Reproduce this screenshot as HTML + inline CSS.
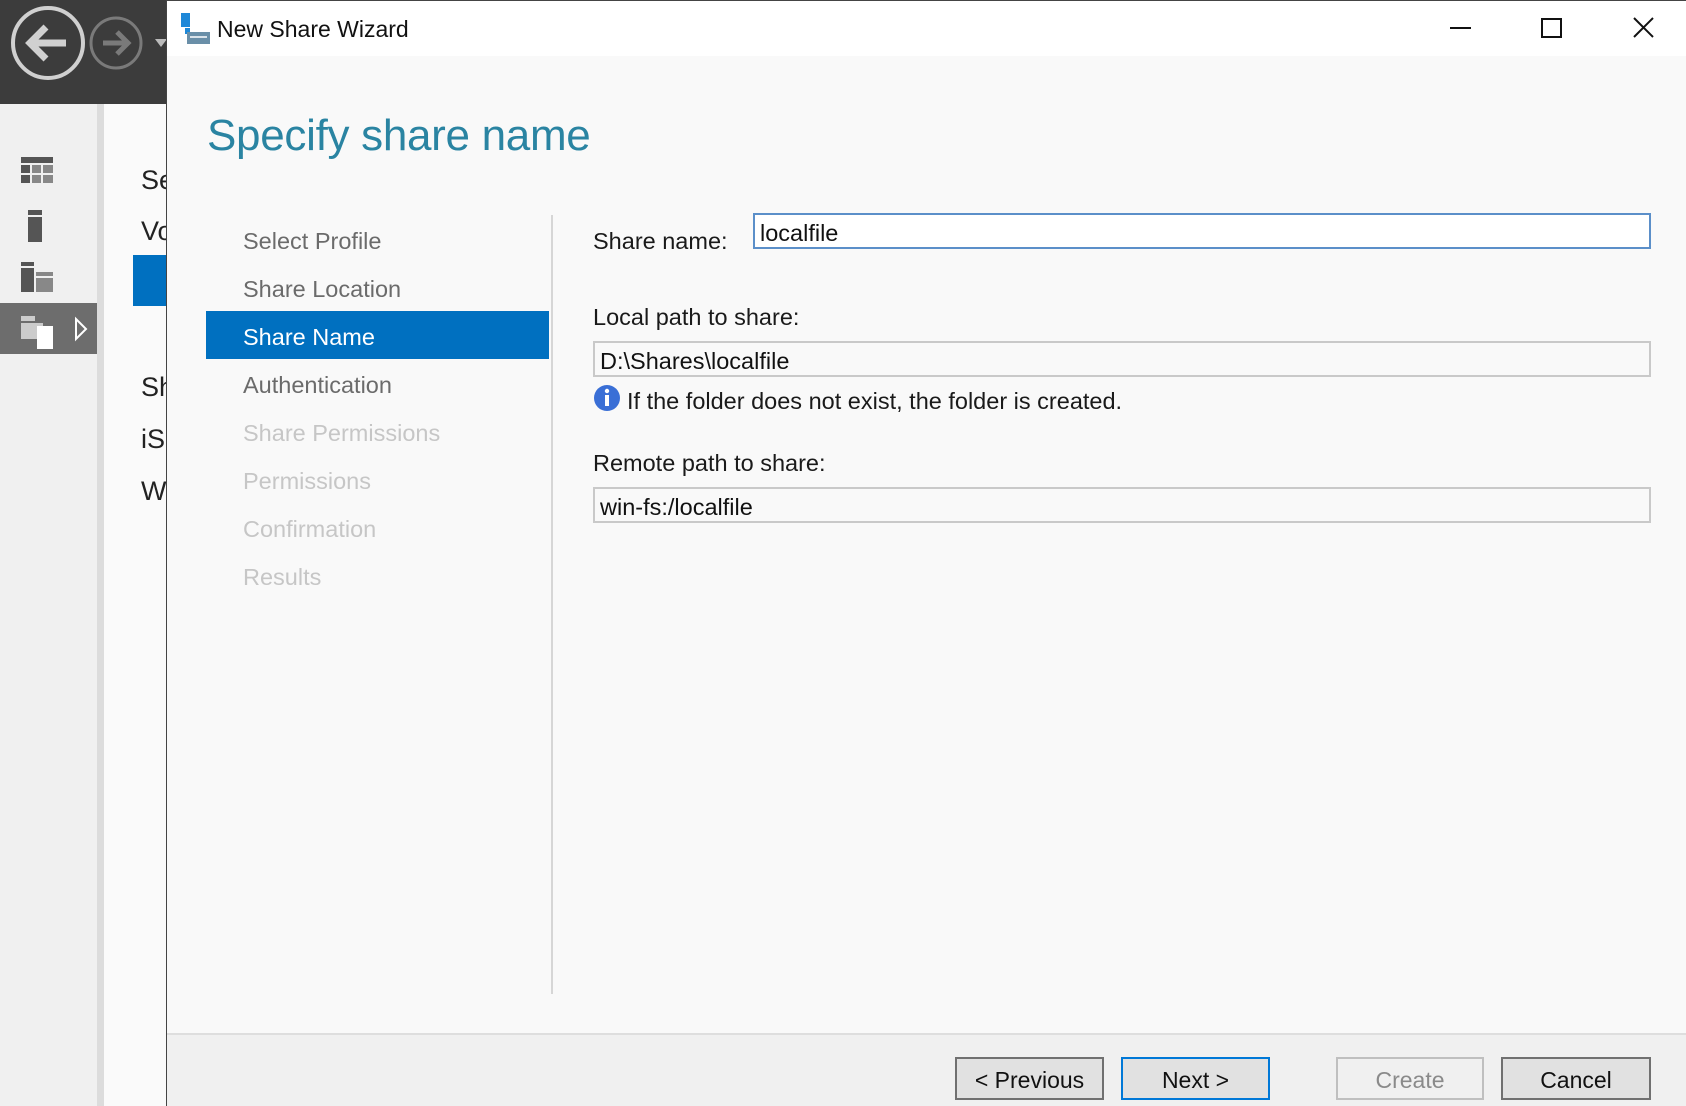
<!DOCTYPE html>
<html><head><meta charset="utf-8"><style>
*{margin:0;padding:0;box-sizing:border-box}
body{width:1686px;height:1106px;overflow:hidden;position:relative;background:#f0f0f0;font-family:"Segoe UI","Liberation Sans",sans-serif}
.a{position:absolute}
.t{position:absolute;white-space:nowrap;line-height:1}
.nav{position:absolute;left:243px;font-size:23.5px;color:#6b6b6b;white-space:nowrap;line-height:1}
.lbl{font-size:23.5px;color:#1a1a1a}
.inp{position:absolute;border:2px solid #c9c9c9;background:#f9f9f9;font-size:23.5px;color:#111;padding-left:5px;line-height:36px}
.btn{position:absolute;top:1057px;height:43px;border:2px solid #707070;background:#e1e1e1;font-size:23px;text-align:center;line-height:42px;color:#111}
</style></head><body>
<div class="a" style="left:0;top:0;width:167px;height:104px;background:#3c3c3c"></div>
<svg class="a" style="left:0;top:0" width="170" height="104">
<circle cx="48" cy="43" r="35" fill="none" stroke="#d0d0d0" stroke-width="4"/>
<path d="M66 43H30M46 27L30 43L46 59" fill="none" stroke="#d0d0d0" stroke-width="7"/>
<circle cx="116" cy="43" r="25" fill="none" stroke="#7a7a7a" stroke-width="3"/>
<path d="M103 43H128M117 32L128 43L117 54" fill="none" stroke="#7a7a7a" stroke-width="5"/>
<path d="M155 39L167 39L161 47Z" fill="#bbb"/>
</svg>
<div class="a" style="left:0;top:104px;width:97px;height:1002px;background:#f0f0f0"></div>
<div class="a" style="left:97px;top:104px;width:7px;height:1002px;background:#dcdcdc"></div>
<div class="a" style="left:104px;top:104px;width:63px;height:1002px;background:#fafafa"></div>
<svg class="a" style="left:0;top:150px" width="97" height="210">
<g fill="#555"><rect x="21" y="7" width="32" height="6"/><rect x="21" y="15" width="9" height="8"/><rect x="32" y="15" width="9" height="8" fill="#888"/><rect x="43" y="15" width="10" height="8" fill="#888"/><rect x="21" y="25" width="9" height="8"/><rect x="32" y="25" width="9" height="8" fill="#888"/><rect x="43" y="25" width="10" height="8" fill="#888"/>
<rect x="28" y="60" width="14" height="5"/><rect x="28" y="67" width="14" height="25"/>
<rect x="21" y="112" width="13" height="4"/><rect x="21" y="118" width="13" height="24"/><rect x="36" y="122" width="17" height="4" fill="#888"/><rect x="36" y="128" width="17" height="14" fill="#888"/></g>
<rect x="0" y="153" width="97" height="51" fill="#6d6d6d"/>
<rect x="21" y="166" width="14" height="5" fill="#ccc"/><rect x="21" y="173" width="22" height="16" fill="#ccc"/><rect x="37" y="176" width="16" height="23" fill="#fff"/>
<path d="M76 169L86 179L76 189Z" fill="none" stroke="#fff" stroke-width="2"/>
</svg>
<div class="a" style="left:133px;top:255px;width:34px;height:51px;background:#0070c0"></div>
<div class="t" style="left:141px;top:167px;font-size:27px;color:#222">Se</div>
<div class="t" style="left:141px;top:218px;font-size:27px;color:#222">Vo</div>
<div class="t" style="left:141px;top:374px;font-size:27px;color:#222">Sh</div>
<div class="t" style="left:141px;top:426px;font-size:27px;color:#222">iS</div>
<div class="t" style="left:141px;top:478px;font-size:27px;color:#222">W</div>
<div class="a" style="left:166px;top:0;width:1520px;height:1106px;background:#f9f9f9;border-left:1px solid #444;border-top:1px solid #444"></div>
<div class="a" style="left:167px;top:1px;width:1519px;height:55px;background:#fff"></div>
<svg class="a" style="left:180px;top:12px" width="32" height="32"><rect x="1" y="1" width="9" height="14" fill="#1e88d8"/><rect x="5" y="16" width="5" height="6" fill="#1e88d8"/><rect x="7" y="20" width="23" height="12" fill="#6a8fa8"/><path d="M10 25H27" stroke="#fff" stroke-width="1.5"/></svg>
<div class="t" style="left:217px;top:18px;font-size:23px;color:#111">New Share Wizard</div>
<svg class="a" style="left:1440px;top:10px" width="230" height="40"><path d="M10 18H31" stroke="#111" stroke-width="2"/><rect x="102" y="9" width="19" height="18" fill="none" stroke="#111" stroke-width="2"/><path d="M194 8L213 27M213 8L194 27" stroke="#111" stroke-width="2"/></svg>
<div class="t" style="left:207px;top:114px;font-size:44px;font-weight:300;color:#2a84a2;letter-spacing:-0.3px">Specify share name</div>
<div class="a" style="left:206px;top:311px;width:343px;height:48px;background:#0070c0"></div>
<div class="nav" style="top:230px">Select Profile</div>
<div class="nav" style="top:278px">Share Location</div>
<div class="nav" style="top:326px;color:#fff">Share Name</div>
<div class="nav" style="top:374px">Authentication</div>
<div class="nav" style="top:422px;color:#c6c6c6">Share Permissions</div>
<div class="nav" style="top:470px;color:#c6c6c6">Permissions</div>
<div class="nav" style="top:518px;color:#c6c6c6">Confirmation</div>
<div class="nav" style="top:566px;color:#c6c6c6">Results</div>
<div class="a" style="left:551px;top:215px;width:2px;height:779px;background:#d6d6d6"></div>
<div class="t lbl" style="left:593px;top:230px">Share name:</div>
<div class="inp" style="left:753px;top:213px;width:898px;height:36px;border-color:#5b8fc9;background:#fff">localfile</div>
<div class="t lbl" style="left:593px;top:306px">Local path to share:</div>
<div class="inp" style="left:593px;top:341px;width:1058px;height:36px">D:\Shares\localfile</div>
<svg class="a" style="left:593px;top:384px" width="28" height="28"><circle cx="14" cy="14" r="13" fill="#3a6fd6"/><rect x="12" y="11" width="4" height="11" fill="#fff"/><circle cx="14" cy="7" r="2.2" fill="#fff"/></svg>
<div class="t lbl" style="left:627px;top:390px">If the folder does not exist, the folder is created.</div>
<div class="t lbl" style="left:593px;top:452px">Remote path to share:</div>
<div class="inp" style="left:593px;top:487px;width:1058px;height:36px">win-fs:/localfile</div>
<div class="a" style="left:167px;top:1033px;width:1519px;height:2px;background:#dedede"></div>
<div class="a" style="left:167px;top:1035px;width:1519px;height:71px;background:#f0f0f0"></div>
<div class="btn" style="left:955px;width:149px">&lt; Previous</div>
<div class="btn" style="left:1121px;width:149px;border-color:#0078d7">Next &gt;</div>
<div class="btn" style="left:1336px;width:148px;border-color:#bfbfbf;background:#f0f0f0;color:#8a8a8a">Create</div>
<div class="btn" style="left:1501px;width:150px">Cancel</div>
</body></html>
